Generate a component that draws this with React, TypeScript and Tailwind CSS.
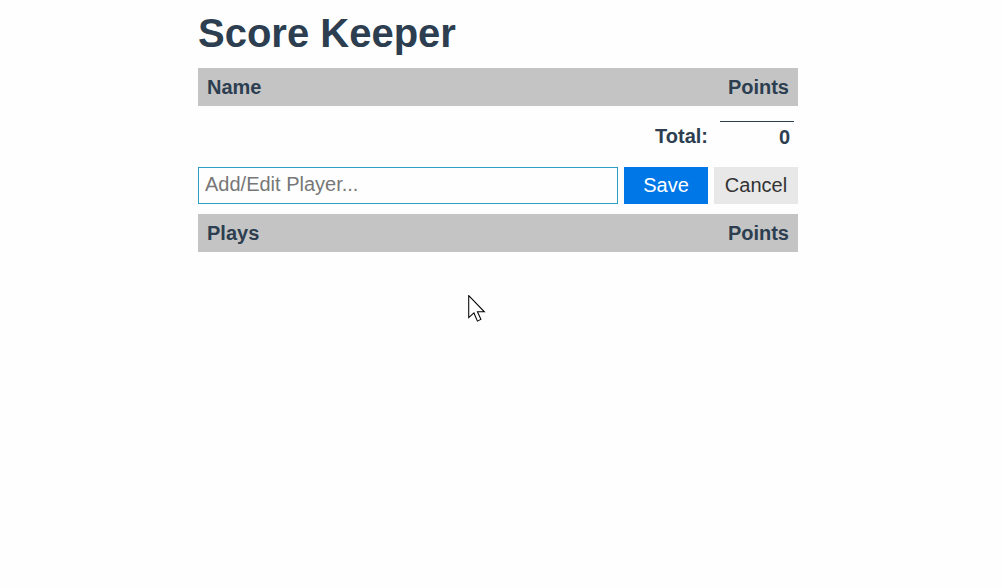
import React from "react";

const App: React.FC = () => {
  return (
    <div className="relative min-h-[588px] bg-[#fefefe] font-['Liberation_Sans',Arial,sans-serif] text-[#2c3e50]">
      <div className="ml-[198px] w-[600px] pt-[9px]">
        <h1 className="text-[40px] font-bold leading-[48px] m-0">Score Keeper</h1>
        <div className="mt-[11px] flex h-[38px] items-center justify-between bg-[#c4c4c4] px-[9px] text-[20px] font-bold">
          <span>Name</span>
          <span>Points</span>
        </div>
        <div className="flex h-[48px] items-start justify-end pt-[15px] text-[20px] font-bold">
          <span className="pt-[0px]">Total:</span>
          <div className="ml-[12px] mr-[4px] w-[74px] border-t border-[#2c3e50] pr-[4px] text-right">0</div>
        </div>
        <div className="mt-[13px] flex h-[37px] gap-[6px]">
          <input
            type="text"
            placeholder="Add/Edit Player..."
            className="h-full flex-1 border border-[#2b9fc4] px-[6px] pb-[2px] text-[20px] text-[#2c3e50] placeholder:text-[#777] outline-none"
          />
          <button className="w-[84px] bg-[#0077e6] pb-[2px] text-[20px] text-white">Save</button>
          <button className="w-[84px] bg-[#e8e8e8] pb-[2px] text-[20px] text-[#333]">Cancel</button>
        </div>
        <div className="mt-[10px] flex h-[38px] items-center justify-between bg-[#c4c4c4] px-[9px] text-[20px] font-bold">
          <span>Plays</span>
          <span>Points</span>
        </div>
      </div>
      <svg className="absolute left-[468px] top-[295px]" width="20" height="29" viewBox="0 0 17 25">
        <path d="M0.5 0.5 L0.5 19.5 L5 15.5 L8 22.5 L11 21 L8 14.5 L14 14.5 Z" fill="#fff" stroke="#000" strokeWidth="0.9" strokeLinejoin="miter" />
      </svg>
    </div>
  );
};

export default App;
